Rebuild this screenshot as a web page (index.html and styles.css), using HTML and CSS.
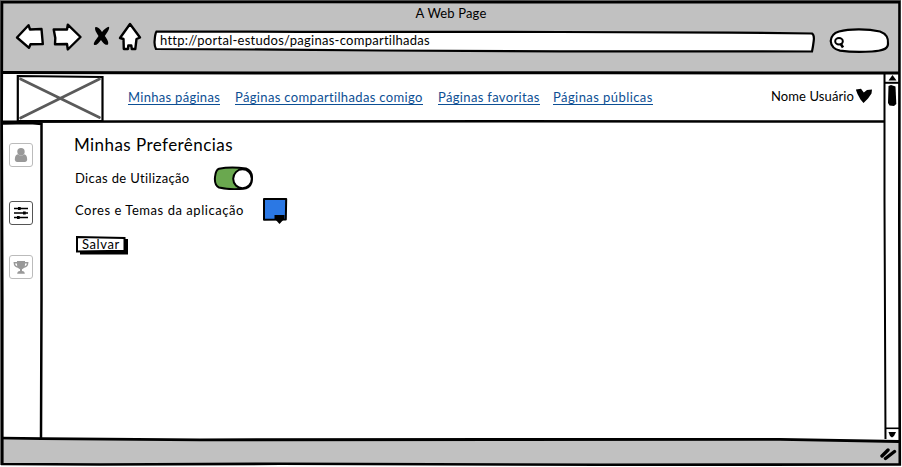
FILE: index.html
```html
<!DOCTYPE html>
<html lang="pt-BR">
<head>
<meta charset="utf-8">
<title>A Web Page</title>
<link rel="stylesheet" href="styles.css">
</head>
<body>
<div class="window">
  <header class="chrome">
    <div class="window-title">A Web Page</div>
    <div class="toolbar">
      <svg class="nav-icons" width="128" height="32" viewBox="14 21 128 32">
        <g fill="#fff" stroke="#000" stroke-width="2.400" stroke-linejoin="round">
          <path d="M17 37.500L28.500 25.200L30 29.500L41.500 29L42.800 44L30.500 44.200L29 47.800Z"/>
          <path d="M53.700 29.500L67 29.500L67.800 24.700L80.500 37L67.800 49.500L67 44L55 44.200L55.300 38Z"/>
          <path d="M130 24L140 37.500L136.500 39L135.300 49L131.800 49L131.300 45.500L128.300 45.500L128 49L123.800 49L123.500 39L120 38Z"/>
        </g>
        <path d="M95.500 27C98 26.500 100 29 102 32C104 29 107 27 109 26.700C110 29 106.500 33 104.800 36C107 39 109 42 108 44.500C105 46 102.500 42 101 40C99 43 96 46 94 44.800C93 43 96.500 39 98.500 36C96.500 33 94 29 95.500 27Z"/>
      </svg>
      <div class="address">
        <svg class="address-shape" width="662" height="23" viewBox="153 30 662 23">
          <path d="M156.500 31.500L300 31.800L560 32L730 32.600L812 33.500Q814.500 35 813.700 41Q813 47 812 51.500L560 51.300L380 50.500L280 49.600L156 49Q154 45 154.700 40Q155 34 156.500 31.500Z" fill="#fff" stroke="#000" stroke-width="2.200"/>
        </svg>
        <span class="address-text">http://portal-estudos/paginas-compartilhadas</span>
      </div>
      <svg class="search" width="62" height="28" viewBox="828 27 62 28">
        <path d="M839 31.500C850 28.500 868 28.800 880 31.500C887 34 888.500 38 888 44C888 50 880 51 872 51.500C860 52.300 848 51.800 840 50.600C833 49 831 45 830.700 41C831 36 834 33 839 31.500Z" fill="#fff" stroke="#000" stroke-width="2.200"/>
        <ellipse cx="839" cy="41.200" rx="3.800" ry="3.200" fill="none" stroke="#000" stroke-width="2"/>
        <path d="M840.500 43.500L843 47.500" stroke="#000" stroke-width="2.600" fill="none"/>
      </svg>
    </div>
  </header>
  <div class="viewport">
    <div class="page">
      <div class="topbar">
        <svg class="logo" width="88" height="48" viewBox="16 74 88 48">
          <path d="M17.800 76L102.500 77V121H17.800Z" fill="#fff" stroke="#000" stroke-width="2.200"/>
          <path d="M20.500 79L99.500 117.500M99.500 79L20.500 118" stroke="#5a5a5a" stroke-width="2.700" stroke-linecap="round"/>
        </svg>
        <nav class="links">
          <a class="mine">Minhas páginas</a>
          <a class="shared">Páginas compartilhadas comigo</a>
          <a class="favorites">Páginas favoritas</a>
          <a class="public">Páginas públicas</a>
        </nav>
        <div class="user"><span>Nome Usuário</span>
          <svg width="17" height="16" viewBox="856 88 17 16"><path d="M855.800 89.500L861 88.800L863.800 92.500L867 90L872 89.500L871.500 93.500L868 98.500L863.500 103L860.500 99.500L857.500 94Z"/></svg>
        </div>
      </div>
      <div class="body">
        <aside class="sidebar">
          <div class="side-item">
            <svg width="14" height="16" viewBox="0 0 14 16" fill="#999"><circle cx="7" cy="4.700" r="3.700"/><path d="M3.500 7.200Q7 10 10.500 7.200Q13.200 8 13.200 13Q12.500 15 11 15H3Q1.500 15 .8 13Q.8 8 3.500 7.200Z"/></svg>
          </div>
          <div class="side-item active">
            <svg width="16" height="14" viewBox="0 0 16 14"><path d="M1 2.500H15M1 7H15M1 11.500H15" stroke="#000" stroke-width="1.400"/><path d="M5 1h2.700v3H5zM10 5.500h2.700v3H10zM4 10h2.700v3H4z"/></svg>
          </div>
          <div class="side-item">
            <svg width="16" height="15" viewBox="0 0 16 15"><path d="M4 1h8v3.500Q12 8 9 9.200V11Q11.800 11.300 11.800 13.700H4.200Q4.200 11.300 7 11V9.200Q4 8 4 4.500Z" fill="#999"/><path d="M4 2.700H1.300Q1.500 6.700 5 7M12 2.700H14.700Q14.500 6.700 11 7" fill="none" stroke="#999" stroke-width="1.400"/></svg>
          </div>
        </aside>
        <main class="content">
          <h1>Minhas Preferências</h1>
          <div class="row tips"><span>Dicas de Utilização</span>
            <svg width="40" height="24" viewBox="213 166 40 24"><path d="M219 168.800C227 167.200 238 167.500 246 168.500C250 170 252.300 174 252 179C251.800 184 250 187 246 188.300C238 189.500 227 189.300 219 187.500C215.500 186 214.500 182 215 177C215.500 172 217 169.500 219 168.800Z" fill="#6aa84f" stroke="#000" stroke-width="2"/><ellipse cx="242.500" cy="178.800" rx="9.300" ry="9.500" fill="#fff" stroke="#000" stroke-width="2"/></svg>
          </div>
          <div class="row theme"><span>Cores e Temas da aplicação</span>
            <svg width="26" height="28" viewBox="262 197 26 28"><path d="M264 199L286.200 199L285.800 219.500L264 219.800Z" fill="#2b78e4" stroke="#000" stroke-width="2" stroke-linejoin="round"/><path d="M274.500 215H284.500V218.500L279.500 224L274.500 218.500Z"/></svg>
          </div>
          <button class="save"><svg class="save-shape" width="54" height="20" viewBox="75 235 54 20"><path d="M80 239H128V254.500H80Z"/><path d="M77 237L124.500 238V250.800L77 251.500Z" fill="#fff" stroke="#000" stroke-width="2"/></svg><span>Salvar</span></button>
        </main>
      </div>
    </div>
    <div class="scrollbar">
      <svg width="15" height="35" viewBox="885 74 15 35"><path d="M888.500 81.500L892.500 76L896.500 81.500Z"/><path d="M885 83.800H899" stroke="#000" stroke-width="2"/><path d="M888.500 87L891 86L895.500 87.500L896.300 105L894 107L889.500 106.500L888 104Z"/></svg>
      <svg width="15" height="13" viewBox="885 427 15 13"><path d="M885 428.300H899" stroke="#000" stroke-width="1.600"/><path d="M888.500 432H896L894 436L892 437.500L890 436Z"/></svg>
    </div>
  </div>
  <footer class="statusbar">
    <svg width="17" height="14" viewBox="880 447 17 14"><path d="M882 456L888 450M885.500 458.500L894.500 451.500" stroke="#000" stroke-width="3.400" stroke-linecap="round"/></svg>
  </footer>
  <svg class="outline" width="902" height="467" viewBox="0 0 902 467" fill="none" stroke="#000">
    <path d="M0 .5H901M.5 0V465" stroke="#666" stroke-width="1"/>
    <path d="M2 2.300L300 2L600 2.200L899.500 2L899.300 220L899.800 464.500L600 464.700L280 463.800L100 464.500L2.300 464V300L1.700 120Z" stroke-width="2.600"/>
    <path d="M2 72.500L300 73L600 72.800L899 73" stroke-width="3"/>
    <path d="M2 121.800L130 121.500L500 121.300L884 121.500" stroke-width="2.400"/>
    <path d="M884.500 74V200L885.500 439" stroke-width="2"/>
    <path d="M3 123.500L30 123L41.500 124V300L41 438" stroke-width="2.500"/>
    <path d="M2 438.200L42 438.700L200 439.800L500 439.500L780 439.300L899 441.500" stroke-width="2.800"/>
  </svg>
</div>
</body>
</html>
```

FILE: styles.css
```css
* { box-sizing: border-box; }
body { margin: 0; background: #fff; font: 13px/16px Lato, sans-serif; color: #000; font-variant-ligatures: none; }
svg { display: block; flex: none; }
.window { position: relative; width: 902px; height: 467px; display: flex; flex-direction: column; overflow: hidden; white-space: nowrap; }
.chrome { height: 73px; margin-right: 2px; background: #c1c1c1; }
.window-title { padding: 5px 0 0 2px; height: 21px; text-align: center; letter-spacing: .16px; }
.toolbar { display: flex; padding-left: 14px; }
.address { position: relative; margin: 9px 0 0 11px; padding: 2px 0 0 7px; width: 662px; height: 23px; }
.address-shape { position: absolute; left: 0; top: 0; }
.address-text { position: relative; letter-spacing: .26px; }
.search { margin: 6px 0 0 13px; }
.viewport { display: flex; height: 367px; }
.page { width: 885px; }
.topbar { display: flex; align-items: center; height: 49px; padding: 1px 0 0 16px; }
.links { display: flex; margin: -3px 0 0 24px; color: #0d4f94; }
.links a { border-bottom: 1px solid #0d4f94; height: 16px; margin-right: 15px; }
.links .mine { width: 92px; letter-spacing: .29px; }
.links .shared { width: 188px; letter-spacing: .34px; }
.links .favorites { width: 102px; margin-right: 13px; letter-spacing: .34px; }
.links .public { width: 100px; margin-right: 0; letter-spacing: .43px; }
.user { display: flex; align-items: center; gap: 2px; margin: -4px 12px 0 auto; letter-spacing: .1px; }
.body { display: flex; height: 318px; }
.sidebar { width: 42px; padding: 21px 0 0 9px; display: flex; flex-direction: column; }
.side-item { width: 24px; height: 24px; margin-bottom: 34px; border: 1px solid #bbb; border-radius: 3px; display: flex; align-items: center; justify-content: center; }
.side-item.active { border-color: #555; margin-bottom: 30px; }
.content { padding: 13px 0 0 32px; }
h1 { margin: 0; font-size: 17px; line-height: 20px; font-weight: normal; letter-spacing: .44px; }
.row { display: flex; align-items: center; padding-left: 1px; }
.row span { flex: none; }
.tips { height: 24px; margin-top: 11px; }
.tips span { width: 138px; letter-spacing: .36px; }
.theme { height: 28px; margin-top: 7px; }
.theme span { width: 187px; margin-top: -2px; letter-spacing: .54px; }
.save { position: relative; display: block; margin: 10px 0 0 1px; width: 54px; height: 20px; padding: 0 0 2px 7px; border: 0; background: none; color: #000; font: inherit; text-align: left; }
.save-shape { position: absolute; left: 0; top: 0; }
.save span { position: relative; letter-spacing: .6px; }
.scrollbar { width: 15px; display: flex; flex-direction: column; justify-content: space-between; }
.statusbar { height: 25px; margin: 0 2px; background: #c1c1c1; display: flex; justify-content: flex-end; padding: 7px 3px 0 0; }
.outline { position: absolute; left: 0; top: 0; pointer-events: none; }
```
